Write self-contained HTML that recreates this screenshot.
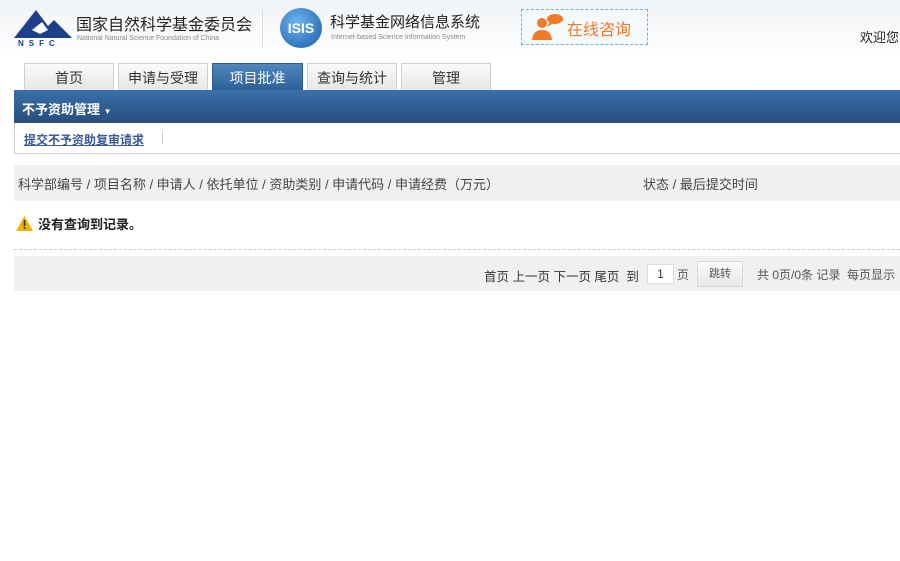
<!DOCTYPE html>
<html><head><meta charset="utf-8"><style>
*{margin:0;padding:0;box-sizing:border-box}
body{width:900px;height:561px;overflow:hidden;background:#fff;font-family:"Liberation Sans","Noto Sans CJK SC",sans-serif;font-size:13px;color:#333;position:relative}
.a{position:absolute;white-space:nowrap}
.tab{position:absolute;top:63px;height:28px;width:90px;background:linear-gradient(#fafafa,#e6e6e6);border:1px solid #d0d0d0;border-bottom:none;text-align:center;line-height:28px;font-size:14px;color:#333}
.tab.on{background:linear-gradient(#4f86bf,#2c5f96);color:#fff;border-color:#2c5f96}
</style></head><body>
<div class="a" style="left:0;top:0;width:900px;height:58px;background:linear-gradient(#f0f3f6,#fff)"></div>
<svg class="a" style="left:14px;top:8px" width="58" height="40"><polygon points="0,30 22,2 34,18 40,12 58,30" fill="#1d3f8a"/><polygon points="18,22 28,14 34,22 26,26" fill="#fff"/><text x="4" y="38" font-size="8" font-weight="bold" fill="#1d3f8a" font-family="Liberation Sans" letter-spacing="5">NSFC</text></svg>
<div class="a" style="left:76px;top:11px;font-size:16px;color:#222">国家自然科学基金委员会</div>
<div class="a" style="left:77px;top:35px;font-size:7px;color:#888">National Natural Science Foundation of China</div>
<div class="a" style="left:262px;top:10px;width:1px;height:38px;background:#ddd"></div>
<div class="a" style="left:280px;top:8px;width:42px;height:40px;border-radius:50%;background:radial-gradient(circle at 40% 35%,#6cb4ee,#1a5aa8);color:#fff;font-size:14px;font-weight:bold;text-align:center;line-height:40px">ISIS</div>
<div class="a" style="left:330px;top:11px;font-size:15px;color:#222">科学基金网络信息系统</div>
<div class="a" style="left:331px;top:34px;font-size:7px;color:#888">Internet-based Science Information System</div>
<div class="a" style="left:521px;top:9px;width:127px;height:36px;border:1px dashed #7ab0d8;background:#f4f9fc"></div>
<svg class="a" style="left:530px;top:13px" width="36" height="28"><circle cx="12" cy="10" r="5" fill="#f07a26"/><path d="M2 27 Q3 17 12 17 Q21 17 22 27Z" fill="#f07a26"/><ellipse cx="25" cy="6" rx="8" ry="5" fill="#f07a26"/><path d="M20 9 L17 14 L24 10Z" fill="#f07a26"/></svg>
<div class="a" style="left:567px;top:16px;font-size:16px;color:#f07a26">在线咨询</div>
<div class="a" style="left:860px;top:27px;font-size:13px;color:#222">欢迎您：</div>
<div class="tab" style="left:24px">首页</div>
<div class="tab" style="left:118px">申请与受理</div>
<div class="tab on" style="left:212px;width:91px">项目批准</div>
<div class="tab" style="left:307px">查询与统计</div>
<div class="tab" style="left:401px">管理</div>
<div class="a" style="left:14px;top:90px;width:886px;height:33px;background:linear-gradient(#3a70aa,#284d7c)"></div>
<div class="a" style="left:22px;top:99px;font-size:13px;font-weight:bold;color:#fff">不予资助管理 <span style="font-size:8px">▼</span></div>
<div class="a" style="left:14px;top:123px;width:886px;height:31px;border-left:1px solid #ccc;border-bottom:1px solid #c8d2dc"></div>
<div class="a" style="left:24px;top:131px;font-size:12px;font-weight:bold;color:#3b5998;text-decoration:underline">提交不予资助复审请求</div>
<div class="a" style="left:162px;top:131px;width:1px;height:13px;background:#ccc"></div>
<div class="a" style="left:14px;top:165px;width:886px;height:36px;background:#f0f0f0"></div>
<div class="a" style="left:18px;top:174px;font-size:13px;color:#444">科学部编号 / 项目名称 / 申请人 / 依托单位 / 资助类别 / 申请代码 / 申请经费（万元）</div>
<div class="a" style="left:643px;top:174px;font-size:13px;color:#444">状态 / 最后提交时间</div>
<svg class="a" style="left:16px;top:216px" width="17" height="15"><polygon points="8.5,0 17,15 0,15" fill="#f0b400"/><rect x="7.7" y="4" width="1.6" height="6" fill="#333"/><rect x="7.7" y="11" width="1.6" height="2" fill="#333"/></svg>
<div class="a" style="left:38px;top:214px;font-size:13px;font-weight:bold;color:#222">没有查询到记录。</div>
<div class="a" style="left:14px;top:249px;width:886px;border-top:1px dashed #ccc"></div>
<div class="a" style="left:14px;top:256px;width:886px;height:35px;background:#f0f0f0"></div>
<div class="a" style="left:484px;top:266px;font-size:12.5px;color:#333">首页 上一页 下一页 尾页 &nbsp;到</div>
<div class="a" style="left:647px;top:264px;width:27px;height:20px;background:#fff;border:1px solid #ddd;text-align:center;line-height:18px;font-size:12px">1</div>
<div class="a" style="left:677px;top:266px;font-size:12px;color:#555">页</div>
<div class="a" style="left:697px;top:261px;width:46px;height:26px;background:linear-gradient(#fafafa,#e8e8e8);border:1px solid #d8d8d8;text-align:center;line-height:24px;font-size:11px;color:#555">跳转</div>
<div class="a" style="left:757px;top:266px;font-size:12px;color:#555">共 0页/0条 记录 &nbsp;每页显示</div>
</body></html>
